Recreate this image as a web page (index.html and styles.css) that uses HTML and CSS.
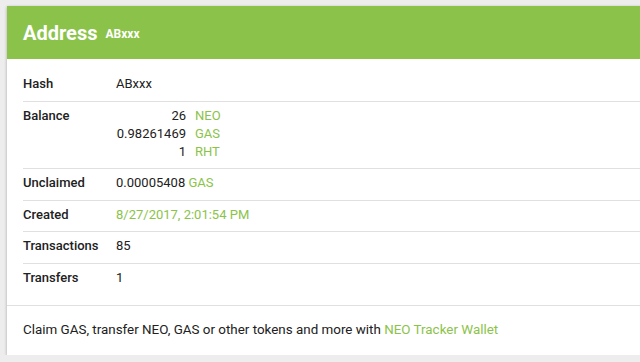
FILE: index.html
```html
<!DOCTYPE html>
<html lang="en">
<head>
    <meta charset="UTF-8">
    <title>Address ABxxx</title>
    <link rel="stylesheet" href="styles.css">
</head>
<body>
    <div class="card">
        <div class="card-header">
            <h1>Address</h1>
            <span class="header-hash">ABxxx</span>
        </div>

        <table class="details">
            <tr>
                <td class="label">Hash</td>
                <td>ABxxx</td>
            </tr>
            <tr>
                <td class="label">Balance</td>
                <td>
                    <div class="balances">
                        <span class="amount">26</span><a class="link">NEO</a>
                        <span class="amount">0.98261469</span><a class="link">GAS</a>
                        <span class="amount">1</span><a class="link">RHT</a>
                    </div>
                </td>
            </tr>
            <tr>
                <td class="label">Unclaimed</td>
                <td>0.00005408 <a class="link">GAS</a></td>
            </tr>
            <tr>
                <td class="label">Created</td>
                <td><a class="link">8/27/2017, 2:01:54 PM</a></td>
            </tr>
            <tr>
                <td class="label">Transactions</td>
                <td>85</td>
            </tr>
            <tr class="last">
                <td class="label">Transfers</td>
                <td>1</td>
            </tr>
        </table>

        <div class="card-footer">
            Claim GAS, transfer NEO, GAS or other tokens and more with <a class="link">NEO Tracker Wallet</a>
        </div>
    </div>
</body>
</html>
```

FILE: styles.css
```css
body {
    margin: 0;
    padding: 6px 0 0 7px;
    background: #ededed;
    font-family: Roboto, "Liberation Sans", Arial, sans-serif;
    font-size: 13px;
    color: #212121;
    overflow: hidden;
}

.card {
    width: 680px;
    background: #fff;
    box-shadow: 0 1px 3px rgba(0, 0, 0, 0.3);
}

.card-header {
    background: #8bc34a;
    color: #fff;
    height: 53px;
    display: flex;
    align-items: center;
    padding: 0 16px;
    gap: 8px;
}

.card-header h1 {
    margin: 0;
    font-size: 20px;
    font-weight: 700;
}

.header-hash {
    font-size: 12px;
    font-weight: 700;
    padding-top: 3px;
}

.details {
    border-collapse: collapse;
    width: 620px;
    margin: 11px 0 0 16px;
}

.details td {
    padding: 5px 0 7.5px;
    line-height: 18px;
    vertical-align: top;
    border-bottom: 1px solid #e0e0e0;
}

.details tr.last td {
    border-bottom: none;
}

.details td.label {
    width: 93px;
    font-weight: 500;
}

.balances {
    display: grid;
    grid-template-columns: 70px auto;
    justify-content: start;
    column-gap: 9px;
}

.amount {
    text-align: right;
}

.link {
    color: #8bc34a;
    text-decoration: none;
}

.card-footer {
    margin-top: 11px;
    border-top: 1px solid #e0e0e0;
    padding: 15px 16px 16px;
    font-size: 13.4px;
    line-height: 18px;
}
```
